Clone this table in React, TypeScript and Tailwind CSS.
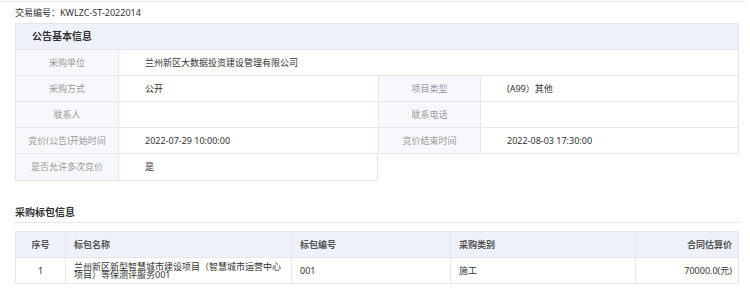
import React from 'react';

const font = { fontFamily: '"Noto Sans", "Noto Sans CJK SC", sans-serif' };

interface Pair {
  label: string;
  value: string;
}

function Label({ children }: { children: React.ReactNode }) {
  return (
    <div className="flex items-center justify-center bg-[#f6f8fc] border-r border-[#e4e7ed] text-[#9a9a9a] whitespace-nowrap">
      {children}
    </div>
  );
}

function Value({ children, last }: { children: React.ReactNode; last?: boolean }) {
  return (
    <div className={`flex items-center pl-[26px] text-[#333] ${last ? '' : 'border-r border-[#e4e7ed]'}`}>
      {children}
    </div>
  );
}

function Row4({ left, right }: { left: Pair; right: Pair }) {
  return (
    <div className="grid grid-cols-[103px_260px_102px_1fr] h-[26px] border-b border-[#e4e7ed]">
      <Label>{left.label}</Label>
      <Value>{left.value}</Value>
      <Label>{right.label}</Label>
      <Value last>{right.value}</Value>
    </div>
  );
}

export default function App() {
  return (
    <div className="w-[750px] h-[291px] bg-white overflow-hidden text-[9px]" style={font}>
      <div className="h-px mt-px bg-[#e6e6e6] w-[745px]" />

      <div className="h-[21px] flex items-center pl-[15px] text-[#333]">
        交易编号：KWLZC-ST-2022014
      </div>

      <div className="ml-[15px] w-[724px]">
        <div className="border border-b-0 border-[#e4e7ed]">
          <div className="h-[26px] flex items-center pl-[16px] bg-[#eef1fa] border-b border-[#e4e7ed] text-[10px] font-bold text-[#333]">
            公告基本信息
          </div>
          <div className="grid grid-cols-[103px_1fr] h-[26px] border-b border-[#e4e7ed]">
            <Label>采购单位</Label>
            <Value last>兰州新区大数据投资建设管理有限公司</Value>
          </div>
          <Row4 left={{ label: '采购方式', value: '公开' }} right={{ label: '项目类型', value: '(A99）其他' }} />
          <Row4 left={{ label: '联系人', value: '' }} right={{ label: '联系电话', value: '' }} />
          <Row4
            left={{ label: '竞价(公告)开始时间', value: '2022-07-29 10:00:00' }}
            right={{ label: '竞价结束时间', value: '2022-08-03 17:30:00' }}
          />
        </div>
        <div className="w-[363px] grid grid-cols-[103px_1fr] h-[27px] border border-t-0 border-[#e4e7ed]">
          <Label>是否允许多次竞价</Label>
          <Value last>是</Value>
        </div>
      </div>

      <div className="ml-[15px] w-[724px] mt-[24px]">
        <div className="h-[18px] flex items-center text-[10px] font-bold text-[#333] border-b border-[#e6e6e6] pb-[2px]">
          采购标包信息
        </div>

        <div className="mt-[8px] border border-[#e4e7ed]">
          <div className="grid grid-cols-[50px_226px_159px_185px_1fr] h-[26px] bg-[#eef1fa] border-b border-[#e4e7ed] text-[#555] font-semibold">
            <div className="flex items-center justify-center border-r border-[#e4e7ed]">序号</div>
            <div className="flex items-center pl-[8px] border-r border-[#e4e7ed]">标包名称</div>
            <div className="flex items-center pl-[8px] border-r border-[#e4e7ed]">标包编号</div>
            <div className="flex items-center pl-[8px] border-r border-[#e4e7ed]">采购类别</div>
            <div className="flex items-center justify-end pr-[6px]">合同估算价</div>
          </div>
          <div className="grid grid-cols-[50px_226px_159px_185px_1fr] h-[25px] text-[#333]">
            <div className="flex items-center justify-center border-r border-[#e4e7ed]">1</div>
            <div className="flex items-center pl-[8px] pr-[6px] border-r border-[#e4e7ed] leading-[8px]">
              兰州新区新型智慧城市建设项目（智慧城市运营中心项目）等保测评服务001
            </div>
            <div className="flex items-center pl-[8px] border-r border-[#e4e7ed]">001</div>
            <div className="flex items-center pl-[8px] border-r border-[#e4e7ed]">施工</div>
            <div className="flex items-center justify-end pr-[6px]">70000.0(元)</div>
          </div>
        </div>
      </div>
    </div>
  );
}
